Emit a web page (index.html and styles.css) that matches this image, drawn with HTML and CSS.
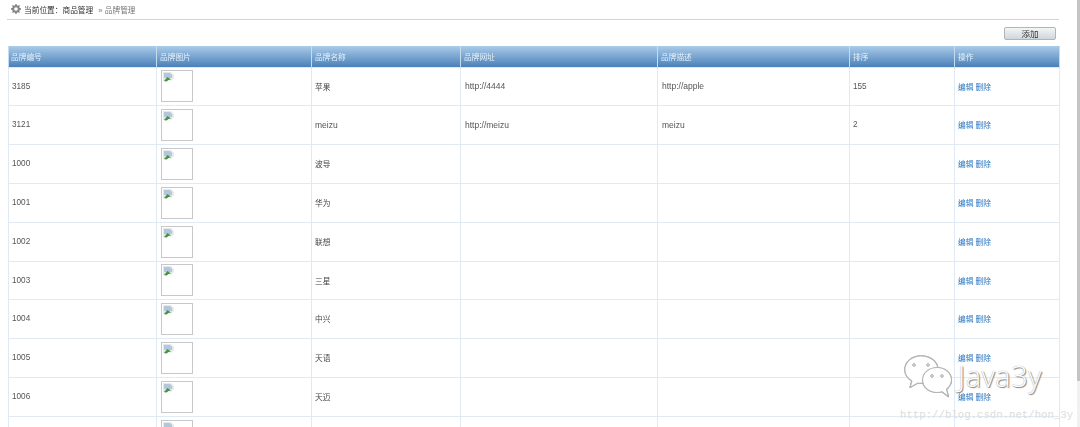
FILE: index.html
```html
<!DOCTYPE html>
<html lang="zh">
<head>
<meta charset="utf-8">
<title>品牌管理</title>
<link rel="stylesheet" href="styles.css">
</head>
<body>
<div class="page">
  <div class="crumb">
    <svg class="gear" viewBox="0 0 10 10" width="10" height="10"><circle cx="5" cy="5" r="2.800" fill="none" stroke="#8a8a8a" stroke-width="2"/><path d="M5 0v2M5 8v2M0 5h2M8 5h2M1.500 1.500l1.400 1.400M7.100 7.100l1.400 1.400M8.500 1.500L7.100 2.900M2.900 7.100L1.500 8.500" stroke="#777" stroke-width="1.300"/></svg>
    <span class="here">当前位置：商品管理</span><span class="trail"> » 品牌管理</span>
  </div>
  <div class="tools"><button class="add">添加</button></div>
  <table class="grid">
    <colgroup><col class="c1"><col class="c2"><col class="c3"><col class="c4"><col class="c5"><col class="c6"><col class="c7"></colgroup>
    <thead><tr><th>品牌编号</th><th>品牌图片</th><th>品牌名称</th><th>品牌网址</th><th>品牌描述</th><th>排序</th><th>操作</th></tr></thead>
    <tbody id="rows"></tbody>
  </table>
</div>
<div class="scroll"><div class="thumb"></div></div>
<div class="mark">
  <svg class="wechat" viewBox="0 0 50 44" width="50" height="44">
    <g fill="#fff" stroke="#b4b4b4" stroke-width="1.200" stroke-linejoin="round">
      <path d="M17 .8C8 .8.800 7 .800 14.500c0 5 3 9 7 11.500L6 32.500l8-4.500c1 .2 2 .3 3 .3 9.500 0 17-6 17-13.800S26.500.8 17 .8z"/>
      <path d="M33 12.500c-8 0-14.500 5.500-14.500 12.500S25 37.500 33 37.500c1.800 0 3.500-.3 5-.8l6.500 5-2-7.500c3-2.300 5-5.700 5-9.200 0-7-6.500-12.500-14.500-12.500z"/>
    </g>
    <g fill="#fff" stroke="#a2a2a2" stroke-width="1"><circle cx="10" cy="10" r="1.300"/><circle cx="24" cy="10" r="1.300"/><circle cx="28" cy="21" r="1.300"/><circle cx="38" cy="21" r="1.300"/></g>
  </svg>
  <span class="brand">Java3y</span>
  <span class="url">http://blog.csdn.net/hon_3y</span>
</div>
<script src="app.js"></script>
</body>
</html>
```
FILE: styles.css
```css
html, body { margin: 0; height: 427px; overflow: hidden; background: #fff; }
body { font: 7.7px "Liberation Sans", "Noto Sans CJK SC", sans-serif; color: #555; position: relative; }
.page { padding: 0 21px 0 8px; filter: blur(.3px); }
.crumb { height: 19px; margin-left: -1px; padding-left: 4px; display: flex; align-items: center; gap: 3px; border-bottom: 1px solid #d4d4d4; color: #333; white-space: pre; }
.gear { flex: none; margin-top: -1px; }
.trail { color: #777; }
.tools { height: 26px; display: flex; justify-content: flex-end; align-items: flex-start; }
.add { margin: 7px 3px 0 0; width: 52px; height: 13px; padding: 0 0 2px; border: 1px solid #aeb6bc; border-radius: 2px; background: linear-gradient(#f4f5f6, #cfd6da); font: 8.500px/10px "Noto Sans CJK SC", sans-serif; color: #333; }
.grid { width: 1051px; table-layout: fixed; border-collapse: collapse; }
.c1 { width: 148px; } .c2 { width: 155px; } .c3 { width: 149px; } .c4 { width: 197px; } .c5 { width: 192px; } .c6 { width: 105px; } .c7 { width: 105px; }
th { box-sizing: border-box; height: 21px; padding: 0 0 0 3px; text-align: left; font-weight: normal; color: #e6f0f8; background: linear-gradient(#a9cbe8, #4a80b9); border-left: 1px solid #c5dcf0; }
th:first-child { padding-left: 2px; }
th:last-child { border-right: 1px solid #c5dcf0; }
td { box-sizing: border-box; height: 39px; padding: 0 0 0 3px; border: 1px solid #dfeaf4; color: #555; white-space: nowrap; font-size: 8.500px; }
tr:nth-child(1) td, tr:nth-child(6) td { height: 38px; }
td.num { font-size: 8.200px; padding-left: 3px; }
td.cn { font-size: 7.700px; color: #444; }
td.url-cell { padding-left: 4px; }
td.pic { padding: 0 0 0 4px; }
.broken { display: block; width: 30px; height: 30px; border: 1px solid #c8c8c8; overflow: hidden; }
.broken svg { display: block; margin: 1px 0 0 1px; }
td a { color: #2a76c0; text-decoration: none; }
td.ops { font-size: 7.700px; }
.scroll { position: absolute; right: 0; top: 0; width: 3px; height: 427px; background: #f1f1f1; }
.thumb { height: 381px; background: #c4c4c4; }
.mark { position: absolute; left: 0; top: 0; width: 1080px; height: 427px; pointer-events: none; }
.wechat { position: absolute; left: 904px; top: 355px; filter: drop-shadow(.6px .6px .4px #aaa); }
.brand { position: absolute; left: 958px; top: 358px; font: 300 29px/36px "Open Sans", sans-serif; color: #fff; text-shadow: 1px 1px 1px #808080, 0 0 1px #909090; letter-spacing: .5px; }
.url { position: absolute; left: 900px; top: 408px; font: 10.700px/14px "Liberation Mono", monospace; color: #dcdcdc; }
```
FILE: app.js
```js
const data = [
  ["3185","苹果","http://4444","http://apple","155"],
  ["3121","meizu","http://meizu","meizu","2"],
  ["1000","波导","","",""],
  ["1001","华为","","",""],
  ["1002","联想","","",""],
  ["1003","三星","","",""],
  ["1004","中兴","","",""],
  ["1005","天语","","",""],
  ["1006","天迈","","",""]
];
const icon = '<svg viewBox="0 0 12 12" width="12" height="12"><path d="M0 0h8l3 3v3l-3 3-2-1-3 2-3-1z" fill="#e4e9ee"/><path d="M1 1h6l2 2v3H1z" fill="#b3c7da"/><path d="M1 9l3.500-4 3.500 2.500-2.500.5-2 1.500z" fill="#469340"/></svg>';
const pic = `<td class="pic"><span class="broken">${icon}</span></td>`;
const rows = data.map(r =>
  `<tr><td class="num">${r[0]}</td>${pic}<td class="${/[a-z]/.test(r[1]) ? "" : "cn"}">${r[1]}</td><td class="url-cell">${r[2]}</td><td class="url-cell">${r[3]}</td><td class="num">${r[4]}</td><td class="ops"><a href="#">编辑</a> <a href="#">删除</a></td></tr>`
);
rows.push(`<tr><td></td>${pic}<td></td><td></td><td></td><td></td><td></td></tr>`);
document.getElementById("rows").innerHTML = rows.join("");
```
